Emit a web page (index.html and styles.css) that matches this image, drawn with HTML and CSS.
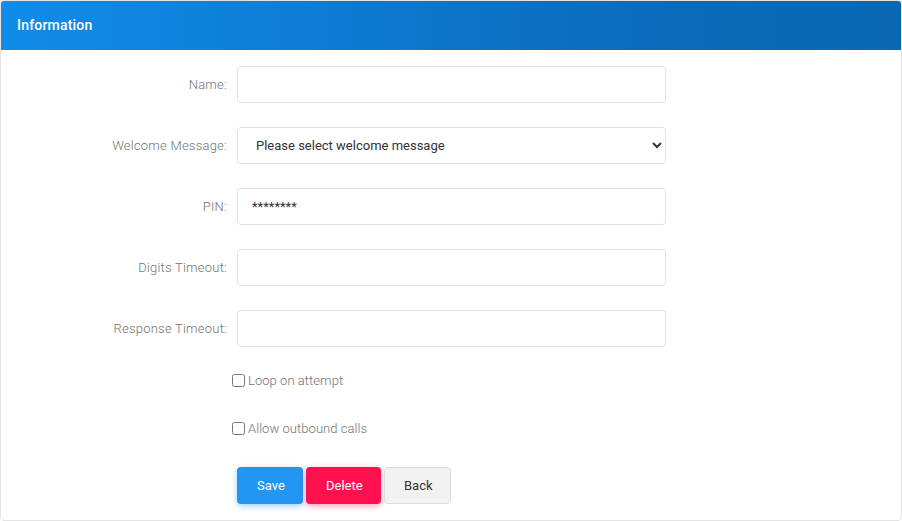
FILE: index.html
```html
<!DOCTYPE html>
<html>
<head>
<meta charset="utf-8">
<link rel="stylesheet" href="styles.css">
</head>
<body>
<div class="card">
  <div class="card-header">Information</div>
  <form class="card-body">
    <div class="row">
      <label class="label">Name:</label>
      <input class="control" type="text">
    </div>
    <div class="row">
      <label class="label">Welcome Message:</label>
      <select class="control select">
        <option>Please select welcome message</option>
      </select>
    </div>
    <div class="row">
      <label class="label">PIN:</label>
      <input class="control" type="text" value="********">
    </div>
    <div class="row">
      <label class="label">Digits Timeout:</label>
      <input class="control" type="text">
    </div>
    <div class="row">
      <label class="label">Response Timeout:</label>
      <input class="control" type="text">
    </div>
    <div class="check-row first"><label class="check"><input type="checkbox"><span>Loop on attempt</span></label></div>
    <div class="check-row"><label class="check"><input type="checkbox"><span>Allow outbound calls</span></label></div>
    <div class="actions">
      <button type="button" class="btn btn-save">Save</button>
      <button type="button" class="btn btn-delete">Delete</button>
      <button type="button" class="btn btn-back">Back</button>
    </div>
  </form>
</div>
</body>
</html>
```
FILE: styles.css
```css
html, body { margin: 0; padding: 0; background: #fff; }
body { font-family: Roboto, "Liberation Sans", sans-serif; font-size: 13px; }
.card {
  box-sizing: border-box;
  width: 902px;
  height: 521px;
  border: 1px solid #e3e3e3;
  border-radius: 4px;
  overflow: hidden;
}
.card-header {
  height: 49px;
  box-sizing: border-box;
  padding: 16px 16px 0;
  background: linear-gradient(90deg, #118ce9 0%, #0a6cbd 70%, #0a68b2 100%);
  color: #fff;
  font-weight: 500;
  font-size: 14px;
  letter-spacing: 0.2px;
  line-height: 16px;
}
.card-body { padding-top: 16px; display: flex; flex-direction: column; }
.row { display: flex; align-items: center; height: 37px; margin-bottom: 24px; }
.row:nth-child(5) { margin-bottom: 0; }
.label {
  width: 226px;
  text-align: right;
  color: #737373;
  font-weight: 300;
  letter-spacing: 0.22px;
  padding-right: 10px;
}
.control {
  box-sizing: border-box;
  width: 429px;
  height: 37px;
  border: 1px solid #e1e1e1;
  border-radius: 4px;
  padding: 0 14px;
  font-family: Roboto, "Liberation Sans", sans-serif;
  font-size: 13px;
  color: #333;
  background: #fff;
  outline: none;
}
.select { padding-left: 14px; }
.check-row { padding-left: 231px; height: 16px; display: flex; align-items: center; margin-top: 32px; }
.check-row.first { margin-top: 25px; }
.check {
  display: flex; align-items: center;
  color: #737373;
  font-weight: 300;
  letter-spacing: 0.05px;
  font-size: 13px;
}
.check input { margin: 0 3px 0 0; width: 13px; height: 13px; }
.actions { padding-left: 236px; margin-top: 31px; display: flex; gap: 3px; }
.btn {
  height: 37px;
  box-sizing: border-box;
  border-radius: 4px;
  border: 1px solid transparent;
  font-family: Roboto, "Liberation Sans", sans-serif;
  font-size: 13px;
  padding: 0 19px;
  cursor: pointer;
}
.btn-save { background: #2196f3; color: #fff; width: 66px; box-shadow: 0 2px 6px rgba(33,150,243,0.45); }
.btn-delete { background: #ff1150; color: #fff; width: 75px; box-shadow: 0 2px 6px rgba(255,17,80,0.4); }
.btn-back { background: #f2f2f2; color: #333; border-color: #dcdcdc; width: 67px; }
```
